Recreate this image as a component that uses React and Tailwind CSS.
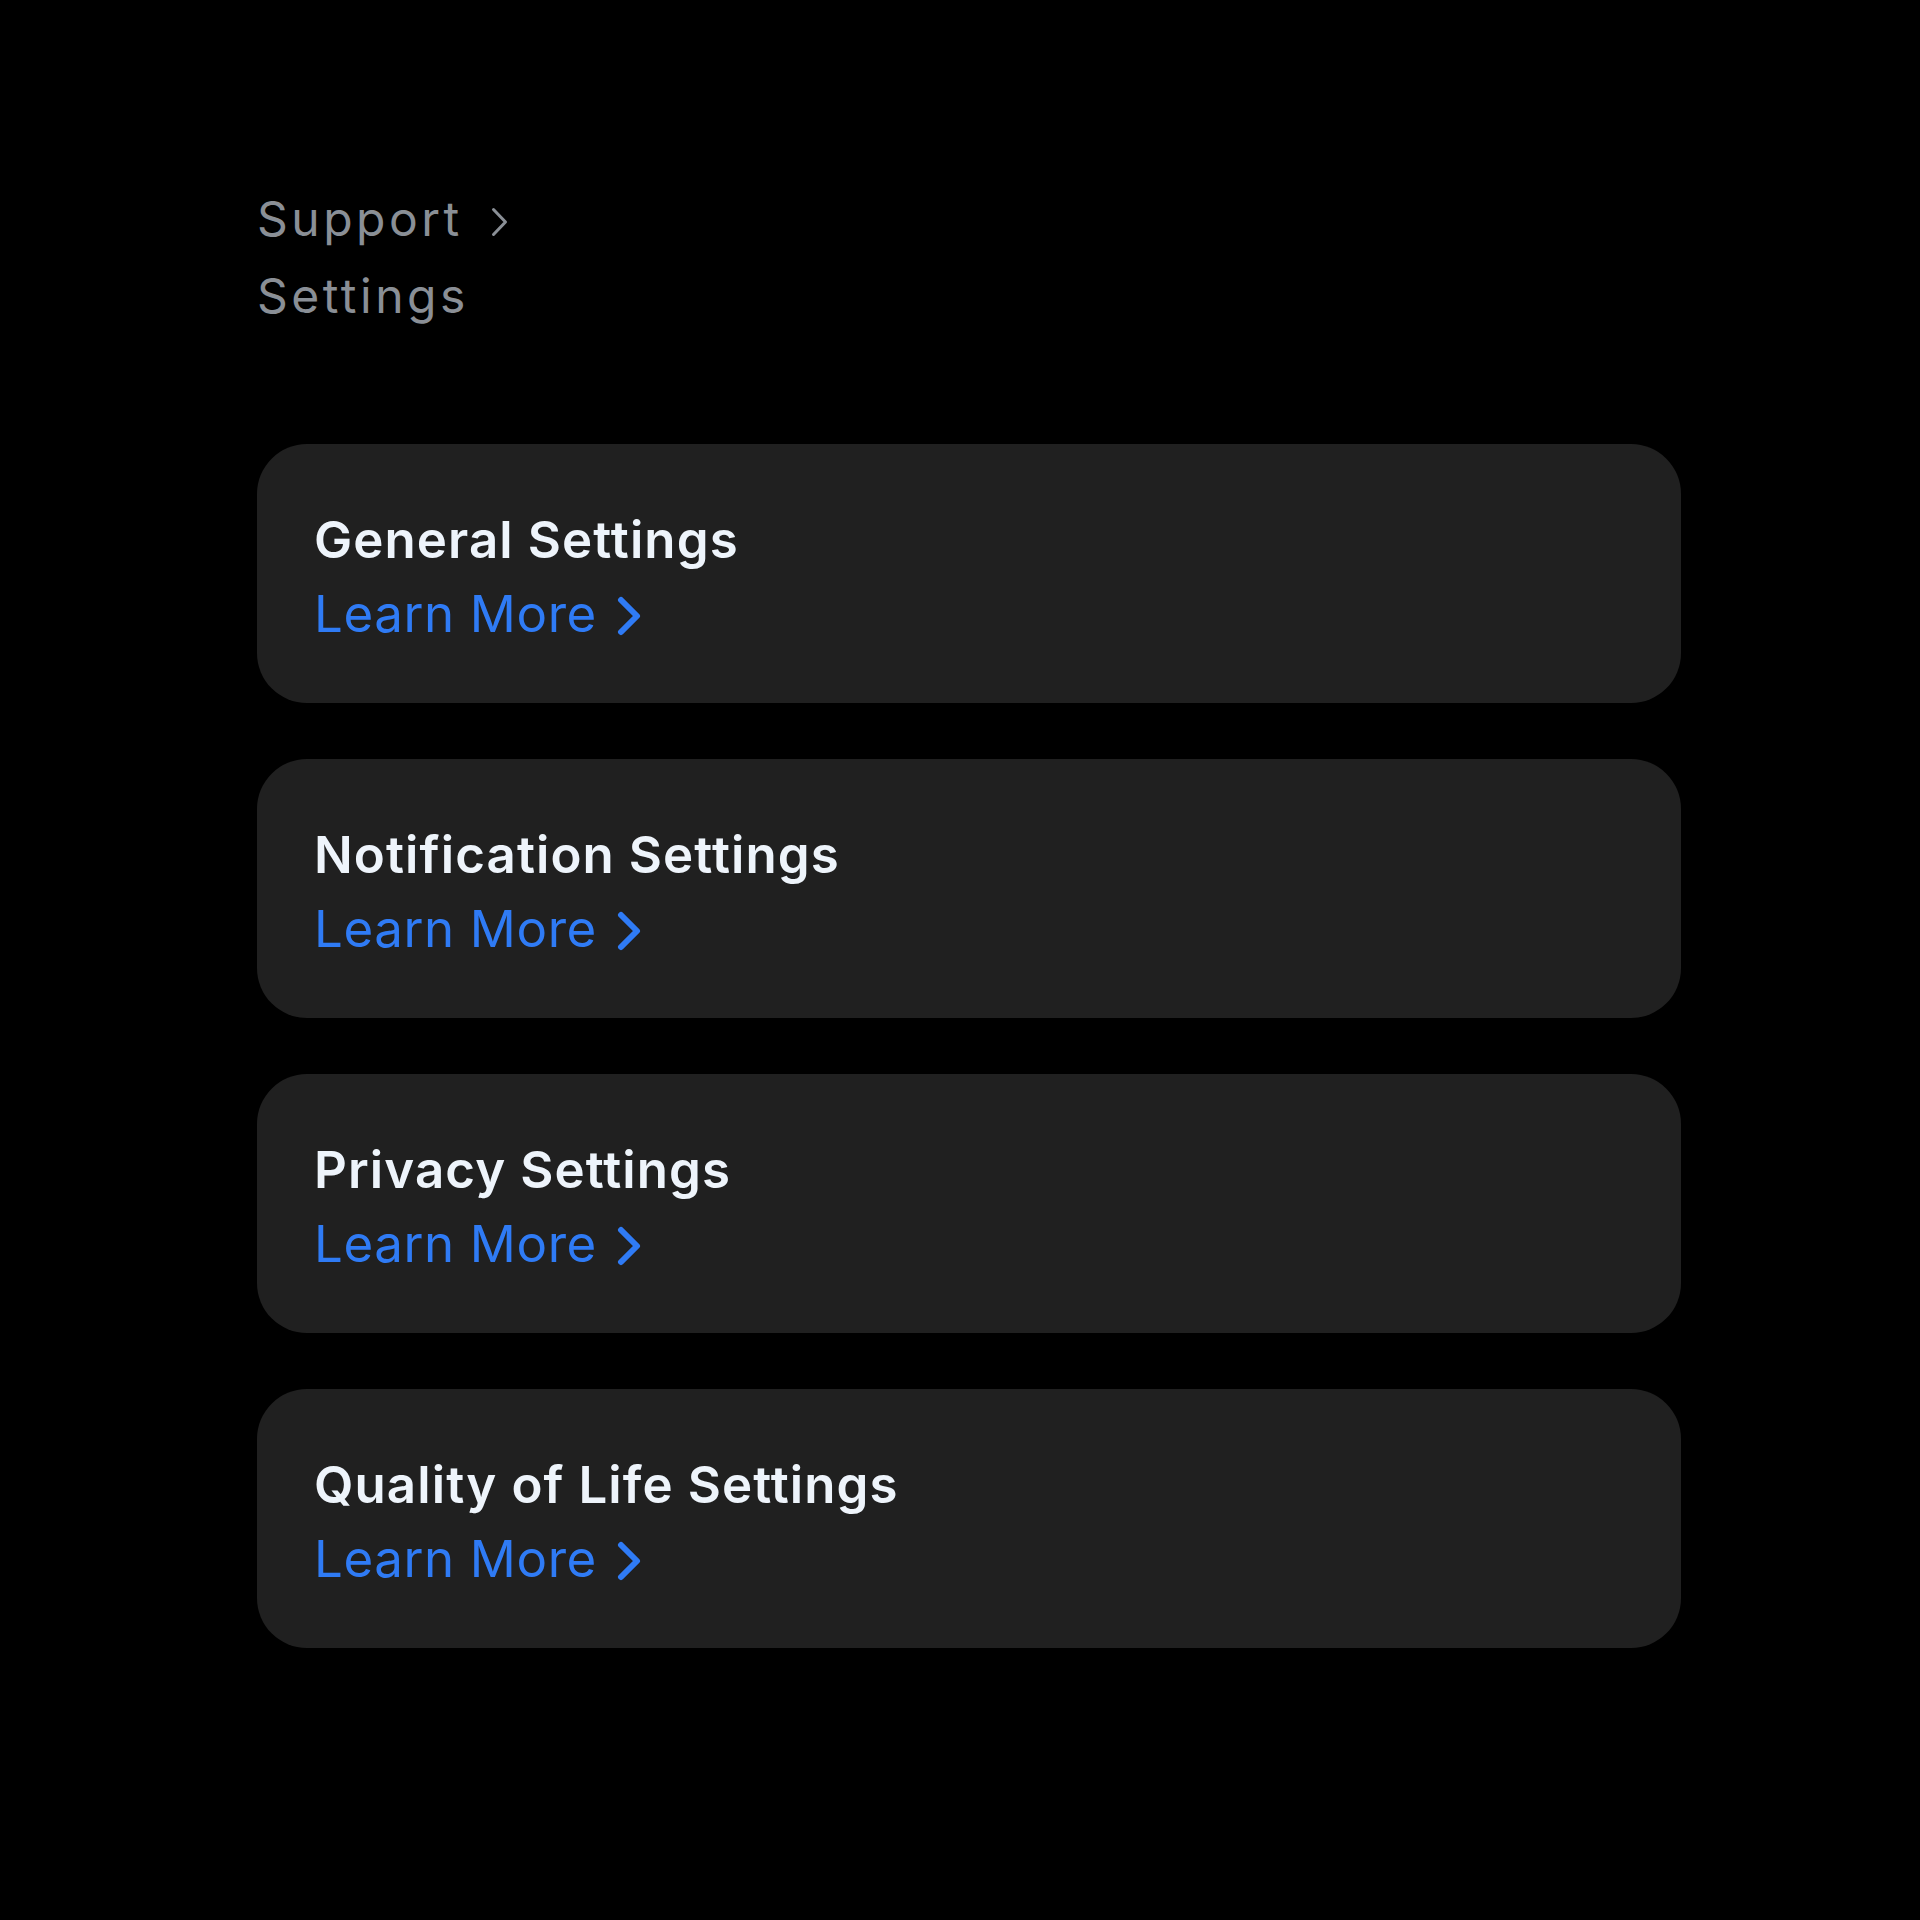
const sections = ['General Settings', 'Notification Settings', 'Privacy Settings', 'Quality of Life Settings']

function Chevron({ className, width, height, strokeWidth }) {
  return (
    <svg
      className={className}
      width={width}
      height={height}
      viewBox={`0 0 ${width} ${height}`}
      fill="none"
      stroke="currentColor"
      strokeWidth={strokeWidth}
      strokeLinecap="round"
      strokeLinejoin="round"
    >
      <path d={`M${strokeWidth / 2 + 1} ${strokeWidth / 2 + 1} L${width - strokeWidth / 2 - 1} ${height / 2} L${strokeWidth / 2 + 1} ${height - strokeWidth / 2 - 1}`} />
    </svg>
  )
}

function SettingsCard({ title }) {
  return (
    <div className="flex h-[259px] flex-col justify-center rounded-[50px] bg-[#202020] px-[57px] pt-[6px]">
      <h2 className="text-[51px] font-semibold leading-[74px] tracking-[1.1px] text-[#eef4fb] [font-variant-ligatures:none]">
        {title}
      </h2>
      <a href="#" className="flex items-center gap-[20px] text-[51px] leading-[74px] tracking-[0.6px] text-[#2f7bf5]">
        <span>Learn More</span>
        <Chevron className="mt-[4px]" width={24} height={40} strokeWidth={6} />
      </a>
    </div>
  )
}

export default function App() {
  return (
    <div className="min-h-[1920px] w-full bg-black pl-[257px] pr-[239px] pt-[180px] font-['Inter',sans-serif]">
      <nav className="text-[48px] leading-[77px] tracking-[3.5px] text-[#8a8f96] [font-variant-ligatures:none]">
        <div className="flex items-center gap-[28px]">
          <span>Support</span>
          <Chevron className="mt-[6px]" width={17} height={30} strokeWidth={3} />
        </div>
        <div>Settings</div>
      </nav>
      <div className="mt-[110px] flex flex-col gap-[56px]">
        {sections.map((title) => (
          <SettingsCard key={title} title={title} />
        ))}
      </div>
    </div>
  )
}
